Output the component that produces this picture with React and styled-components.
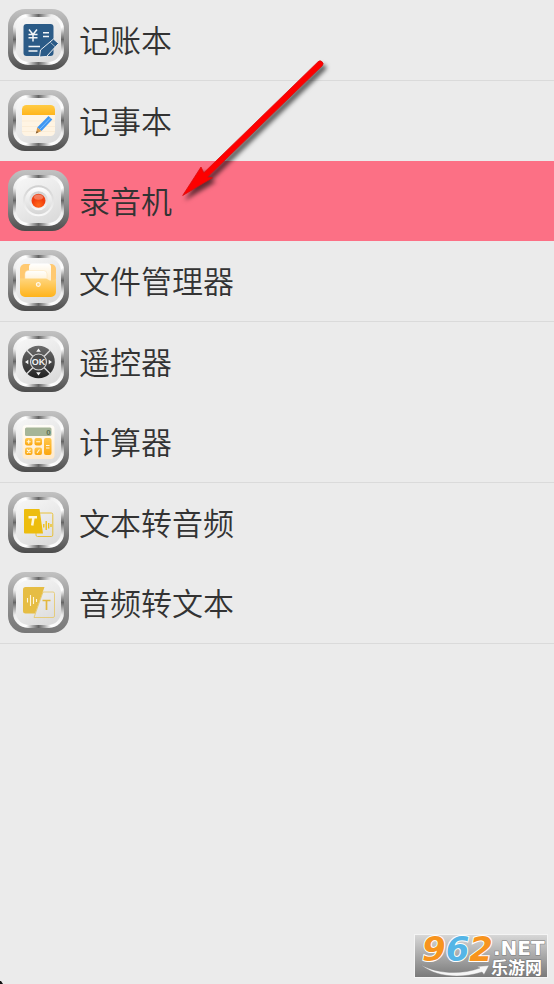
import React from 'react';
import styled, { createGlobalStyle } from "styled-components"

const tools = [
    { name: '记账本', icon: <LedgerIcon />, divided: true },
    { name: '记事本', icon: <NotesIcon /> },
    { name: '录音机', icon: <RecorderIcon />, active: true },
    { name: '文件管理器', icon: <FilesIcon />, divided: true },
    { name: '遥控器', icon: <RemoteIcon /> },
    { name: '计算器', icon: <CalculatorIcon />, divided: true },
    { name: '文本转音频', icon: <TextToAudioIcon /> },
    { name: '音频转文本', icon: <AudioToTextIcon />, divided: true, pale: true },
]

export default function App() {
    return (
        <Page>
            <GlobalStyle />
            <List>
                {tools.map(tool => (
                    <Item key={tool.name} $divided={tool.divided}>
                        <Row type="button" $active={tool.active}>
                            <Frame $pale={tool.pale}>
                                <Ring>
                                    <Face>{tool.icon}</Face>
                                </Ring>
                            </Frame>
                            <Name>{tool.name}</Name>
                        </Row>
                    </Item>
                ))}
            </List>
            <Pointer />
            <SiteBadge />
            <Corner viewBox="0 0 3 3" aria-hidden="true">
                <path d="M0 0 L1 0 L3 3 L0 3Z" fill="#111" />
            </Corner>
        </Page>
    )
}

function LedgerIcon() {
    return (
        <Glyph viewBox="8 8 45 45" aria-hidden="true">
            <rect x="15.5" y="15" width="30" height="32" rx="3" fill="#2b5b87" />
            <g fill="none" stroke="#f4f6f8" strokeWidth="1.5">
                <path d="M21 20.5l4 5 4-5M25 25v7.5M20.5 25.5h9M20.5 28.8h9" />
                <path d="M35 23.8h6M35 27.5h6M20.5 37.5h11.5M20.5 42h9" />
            </g>
            <path d="M45.5 30l5 4.5L38.5 47.5l-7 .5 1-7z" fill="#2b5b87" stroke="#eef0f2" strokeWidth="1" />
            <path d="M42.5 33.5l4.6 4.2" stroke="#eef0f2" strokeWidth="0.6" />
        </Glyph>
    )
}

function NotesIcon() {
    return (
        <Glyph viewBox="8 8 45 45" aria-hidden="true">
            <defs>
                <linearGradient id="notesTop" x1="0" y1="0" x2="0" y2="1">
                    <stop offset="0" stopColor="#ffcb45" />
                    <stop offset="1" stopColor="#ffb51c" />
                </linearGradient>
            </defs>
            <rect x="14" y="15" width="33" height="31" rx="4.5" fill="#fff4e3" />
            <path d="M14 25v-5.5a4.5 4.5 0 0 1 4.5-4.5h24a4.5 4.5 0 0 1 4.5 4.5V25z" fill="url(#notesTop)" />
            <path d="M14 31h33M14 36.5h33M14 41.5h33" stroke="#f9e8d0" strokeWidth="0.7" />
            <path d="M40.5 26l3.8 3.5-10.800 11.500-4.300-3.500z" fill="#3f97f2" />
            <path d="M42.3 28.2L31.7 39.3" stroke="#7fc0ff" strokeWidth="1" />
            <path d="M29.2 37.5l4.300 3.500-5.500 2.500z" fill="#d99a4a" />
            <path d="M28.8 41l1.5 1.300-2.600 1.300z" fill="#735334" />
        </Glyph>
    )
}

function RecorderIcon() {
    return (
        <Glyph viewBox="8 8 45 45" aria-hidden="true">
            <defs>
                <linearGradient id="recBowl" x1="0" y1="0" x2="0" y2="1">
                    <stop offset="0" stopColor="#cfcfcf" />
                    <stop offset="1" stopColor="#fafafa" />
                </linearGradient>
                <linearGradient id="recRim" x1="0" y1="0" x2="0" y2="1">
                    <stop offset="0" stopColor="#ffffff" />
                    <stop offset="1" stopColor="#d5d5d5" />
                </linearGradient>
                <radialGradient id="recDot" cx="0.5" cy="0.8" r="0.8">
                    <stop offset="0" stopColor="#ff6a1c" />
                    <stop offset="0.6" stopColor="#f23c0c" />
                    <stop offset="1" stopColor="#e8522c" />
                </radialGradient>
            </defs>
            <circle cx="30.5" cy="30.7" r="15.5" fill="url(#recBowl)" />
            <circle cx="30.5" cy="30.7" r="13.5" fill="url(#recRim)" />
            <circle cx="30.5" cy="30.7" r="9.5" fill="url(#recBowl)" />
            <circle cx="30.5" cy="30.7" r="7" fill="url(#recDot)" />
            <ellipse cx="30.5" cy="27.2" rx="4.5" ry="2.5" fill="#fff" opacity="0.3" />
        </Glyph>
    )
}

function FilesIcon() {
    return (
        <Glyph viewBox="8 8 45 45" aria-hidden="true">
            <defs>
                <linearGradient id="filesFront" x1="0" y1="0" x2="0" y2="1">
                    <stop offset="0" stopColor="#ffd680" />
                    <stop offset="1" stopColor="#ffb31a" />
                </linearGradient>
                <linearGradient id="filesPaper" x1="0" y1="0" x2="0" y2="1">
                    <stop offset="0" stopColor="#ffffff" />
                    <stop offset="1" stopColor="#ffe8bc" />
                </linearGradient>
            </defs>
            <rect x="12" y="14" width="36" height="28" rx="5" fill="#ffc971" />
            <rect x="21" y="13.5" width="22" height="22" rx="3.5" fill="url(#filesPaper)" />
            <rect x="17" y="20.5" width="22" height="16" rx="3.5" fill="url(#filesPaper)" stroke="#ffe2b0" strokeWidth="0.5" />
            <path d="M12 28.5h25c3 0 3 2 6 2h1c2 0 4-1 4-2.500V42a5 5 0 0 1-5 5H17a5 5 0 0 1-5-5z" fill="url(#filesFront)" />
            <circle cx="30.3" cy="34.500" r="1.9" fill="#ffd27a" stroke="#fff8ea" strokeWidth="1.2" />
        </Glyph>
    )
}

function RemoteIcon() {
    return (
        <Glyph viewBox="8 8 45 45" aria-hidden="true">
            <defs>
                <linearGradient id="remoteDial" x1="0" y1="0" x2="0" y2="1">
                    <stop offset="0" stopColor="#6c6c6c" />
                    <stop offset="0.5" stopColor="#4a4a4a" />
                    <stop offset="1" stopColor="#202020" />
                </linearGradient>
            </defs>
            <circle cx="30.5" cy="31" r="16.3" fill="url(#remoteDial)" />
            <path d="M18.5 19l24 24M42.5 19l-24 24" stroke="#dcdcdc" strokeWidth="1.4" />
            <circle cx="30.5" cy="31" r="8" fill="#4d4d4d" stroke="#d8d8d8" strokeWidth="1.2" />
            <path d="M30.5 17.5l2.300 3.300h-4.600zM30.5 44.500l2.300-3.300h-4.600zM17 31l3.300-2.300v4.600zM44 31l-3.300-2.300v4.600z" fill="#f4f4f4" />
            <SvgText x="30.5" y="34" fontSize="9" fill="#f2f2f2">OK</SvgText>
        </Glyph>
    )
}

function CalculatorIcon() {
    return (
        <Glyph viewBox="8 8 45 45" aria-hidden="true">
            <defs>
                <linearGradient id="calcKey" x1="0" y1="0" x2="0" y2="1">
                    <stop offset="0" stopColor="#ffc74d" />
                    <stop offset="1" stopColor="#fba60d" />
                </linearGradient>
                <linearGradient id="calcBody" x1="0" y1="0" x2="0" y2="1">
                    <stop offset="0" stopColor="#fffdf8" />
                    <stop offset="1" stopColor="#ffe9c8" />
                </linearGradient>
            </defs>
            <rect x="14.5" y="14" width="32" height="34" rx="4" fill="url(#calcBody)" />
            <rect x="17" y="16.5" width="26.5" height="8.5" rx="1.5" fill="#a5b598" />
            <SvgText x="40.5" y="23.8" fontSize="8" fill="#5e7354">0</SvgText>
            <g fill="url(#calcKey)">
                <rect x="17" y="27" width="7.5" height="7.5" rx="2" />
                <rect x="26.5" y="27" width="7.5" height="7.5" rx="2" />
                <rect x="17" y="36.5" width="7.5" height="7.5" rx="2" />
                <rect x="26.5" y="36.5" width="7.5" height="7.5" rx="2" />
                <rect x="36" y="27" width="7.5" height="17" rx="2" />
            </g>
            <path
                d="M18.7 30.7h4M20.7 28.7v4M28.2 30.7h4M19 38.500l3.500 3.500M22.500 38.500L19 42M29 42l2.500-3.500M38 34.500h3.500M38 37h3.500"
                stroke="#fff6df" strokeWidth="1.1" fill="none"
            />
        </Glyph>
    )
}

function TextToAudioIcon() {
    return (
        <Glyph viewBox="8 8 45 45" aria-hidden="true">
            <rect x="28" y="21" width="16.8" height="23.5" rx="1.5" fill="none" stroke="#e9bd28" strokeWidth="0.9" />
            <path d="M17 17h14.5l3.5 24.5H17a1 1 0 0 1-1-1V18a1 1 0 0 1 1-1z" fill="#edbd0e" />
            <path d="M20.5 25.2h8.500M25.5 25.2l-1.300 8.300" stroke="#fff6d8" strokeWidth="2.5" fill="none" />
            <path d="M35.8 32v3.500M38.200 29v9M40.700 31v5.500M43 32v3" stroke="#edbd0e" strokeWidth="1.3" />
        </Glyph>
    )
}

function AudioToTextIcon() {
    return (
        <Glyph viewBox="8 8 45 45" aria-hidden="true">
            <path d="M35 20h10a1.5 1.5 0 0 1 1.5 1.5v22.5a1.5 1.5 0 0 1-1.5 1.5H26z" fill="none" stroke="#e6c765" strokeWidth="0.8" />
            <path d="M17.5 15H36.5L27 41.5h-9.5a2.5 2.5 0 0 1-2.5-2.5V17.5a2.5 2.5 0 0 1 2.5-2.5z" fill="#e6bd43" />
            <path d="M19.500 26v4.500M22.500 23v11M25.500 25v7M28.500 27v3" stroke="#fff5da" strokeWidth="1.1" />
            <path d="M34.5 28.5h8M38.5 28.5v9.5" stroke="#e3b83e" strokeWidth="1.7" fill="none" />
        </Glyph>
    )
}

function Pointer() {
    return (
        <PointerArt viewBox="180 58 150 144" aria-hidden="true">
            <path d="M318 61.800a2.600 2.600 0 0 1 4.200 4L207.500 177l5 .8-29.800 17.700L201 167l2.800 5.800z" fill="#fe0000" stroke="#d80c0c" strokeWidth="0.8" />
        </PointerArt>
    )
}

function SiteBadge() {
    return (
        <Badge viewBox="0 0 134 44" role="img" aria-label="962.NET 乐游网">
            <defs>
                <linearGradient id="badgeBg" x1="0" y1="0" x2="0" y2="1">
                    <stop offset="0" stopColor="#d8d8d8" />
                    <stop offset="1" stopColor="#797979" />
                </linearGradient>
            </defs>
            <rect x="0.5" y="0.5" width="133" height="43" fill="url(#badgeBg)" stroke="#f4f4f4" />
            <path d="M7 31c17 9 40 10 59 3l-3-1.500 12-1-5 9-2-2.500c-22 7-46 5-61-7z" fill="#f6f6f6" stroke="#888" strokeWidth="0.4" />
            <BadgeDigits x="8" y="27">
                <tspan fill="#f7941e">9</tspan>
                <tspan fill="#55b5e6">6</tspan>
                <tspan fill="#f7941e">2</tspan>
            </BadgeDigits>
            <BadgeNet x="79" y="21">.NET</BadgeNet>
            <BadgeName x="77" y="40">乐游网</BadgeName>
        </Badge>
    )
}


const GlobalStyle = createGlobalStyle`
    * {
        box-sizing: border-box;
    }

    body {
        margin: 0;
        background: #ebebeb;
        font-family: "Noto Sans CJK SC", "Noto Sans", sans-serif;
    }
`

const Page = styled.main`
    position: relative;
    min-height: 100vh;
`

const List = styled.ul`
    margin: 0;
    padding: 0;
    list-style: none;
`

const Item = styled.li`
    border-bottom: ${props => props.$divided ? '1px solid #dadada' : 'none'};
`

const Row = styled.button`
    display: flex;
    align-items: center;
    gap: 10px;
    width: 100%;
    height: 80px;
    padding: 0 8px 1px;
    border: none;
    background: ${props => props.$active ? '#fc7085' : 'transparent'};
    color: #333;
    font-family: inherit;
    text-align: left;
    cursor: pointer;
`

const Name = styled.span`
    font-size: 31px;
    font-weight: 350;
    line-height: 41px;
    padding-bottom: 2px;
`

const Frame = styled.span`
    flex: none;
    width: 61px;
    height: 61px;
    padding: 5px;
    border-radius: 17px;
    background: linear-gradient(#c2c2c2, #8e8e8e 55%, ${props => props.$pale ? '#777' : '#4c4c4c'});
`

const Ring = styled.span`
    display: block;
    width: 100%;
    height: 100%;
    padding: 3px;
    border-radius: 15px;
    background: conic-gradient(
        #666 0deg, #aaa 14deg, #eee 28deg, #fff 62deg,
        #aaa 76deg, #666 90deg, #aaa 104deg, #eee 118deg, #fff 152deg,
        #aaa 166deg, #666 180deg, #aaa 194deg, #fff 208deg, #eee 242deg,
        #aaa 256deg, #666 270deg, #aaa 284deg, #eee 298deg, #fff 332deg,
        #aaa 346deg, #666 360deg
    );
`

const Face = styled.span`
    display: block;
    width: 100%;
    height: 100%;
    border-radius: 13px;
    background: linear-gradient(150deg, #f7f7f7, #e9e9e9 50%, #d8d8d8);
`

const Glyph = styled.svg`
    display: block;
    width: 100%;
    height: 100%;
`

const SvgText = styled.text`
    font-family: "Liberation Sans", Arial, sans-serif;
    font-weight: bold;
    text-anchor: middle;
`

const PointerArt = styled.svg`
    position: absolute;
    top: 58px;
    left: 180px;
    width: 150px;
    height: 144px;
    overflow: visible;
    pointer-events: none;
    filter: drop-shadow(3px 4px 2px rgba(0, 0, 0, 0.6));
`

const Badge = styled.svg`
    position: absolute;
    right: 6px;
    bottom: 6px;
    width: 134px;
    height: 44px;
    overflow: visible;
`

const BadgeDigits = styled.text`
    font-family: "DejaVu Sans", sans-serif;
    font-size: 34px;
    font-weight: bold;
    font-style: italic;
    stroke: #fff;
    stroke-width: 2px;
    paint-order: stroke;
`

const BadgeNet = styled.text`
    font-family: "DejaVu Sans", sans-serif;
    font-size: 20px;
    font-weight: bold;
    fill: #fff;
    stroke: #777;
    stroke-width: 1px;
    paint-order: stroke;
`

const BadgeName = styled.text`
    font-family: "Noto Sans CJK SC", sans-serif;
    font-size: 17px;
    font-weight: bold;
    fill: #fff;
    stroke: #777;
    stroke-width: 1px;
    paint-order: stroke;
`

const Corner = styled.svg`
    position: absolute;
    left: 0;
    bottom: 0;
    width: 3px;
    height: 3px;
`
